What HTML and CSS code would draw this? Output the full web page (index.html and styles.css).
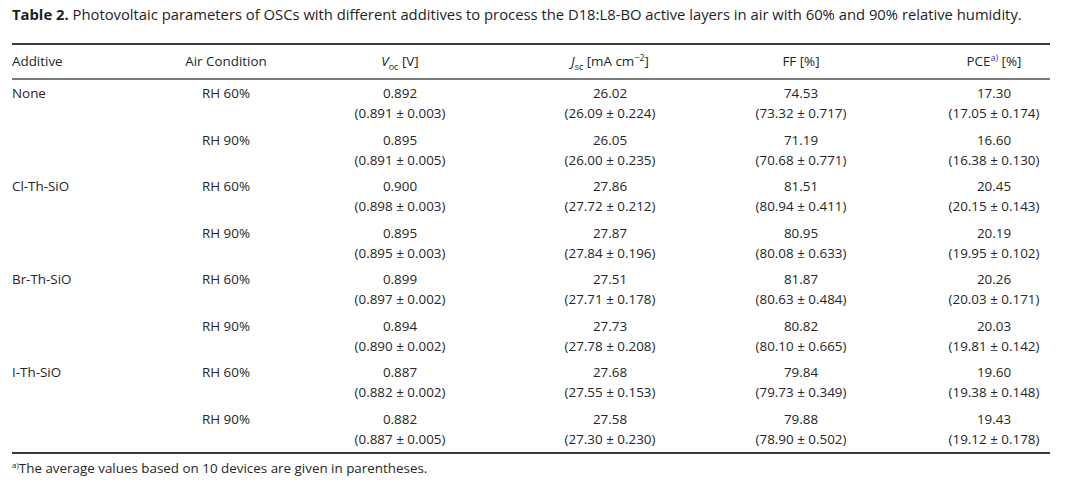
FILE: index.html
```html
<!DOCTYPE html>
<html lang="en">
<head>
<meta charset="utf-8">
<title>Table 2</title>
<link rel="stylesheet" href="styles.css">
</head>
<body>
<div class="page">
  <p class="caption"><b>Table 2.</b> Photovoltaic parameters of OSCs with different additives to process the D18:L8-BO active layers in air with 60% and 90% relative humidity.</p>
  <div class="table">
    <div class="row head">
      <div class="c c1">Additive</div>
      <div class="c c2">Air Condition</div>
      <div class="c c3"><i>V</i><sub>oc</sub> [V]</div>
      <div class="c c4"><i>J</i><sub>sc</sub> [mA cm<sup>−2</sup>]</div>
      <div class="c c5">FF [%]</div>
      <div class="c c6">PCE<sup class="ref">a)</sup> [%]</div>
    </div>

    <div class="row">
      <div class="c c1">None</div><div class="c c2">RH 60%</div>
      <div class="c c3">0.892<br>(0.891 ± 0.003)</div>
      <div class="c c4">26.02<br>(26.09 ± 0.224)</div>
      <div class="c c5">74.53<br>(73.32 ± 0.717)</div>
      <div class="c c6">17.30<br>(17.05 ± 0.174)</div>
    </div>
    <div class="row">
      <div class="c c1"></div><div class="c c2">RH 90%</div>
      <div class="c c3">0.895<br>(0.891 ± 0.005)</div>
      <div class="c c4">26.05<br>(26.00 ± 0.235)</div>
      <div class="c c5">71.19<br>(70.68 ± 0.771)</div>
      <div class="c c6">16.60<br>(16.38 ± 0.130)</div>
    </div>
    <div class="row">
      <div class="c c1">Cl-Th-SiO</div><div class="c c2">RH 60%</div>
      <div class="c c3">0.900<br>(0.898 ± 0.003)</div>
      <div class="c c4">27.86<br>(27.72 ± 0.212)</div>
      <div class="c c5">81.51<br>(80.94 ± 0.411)</div>
      <div class="c c6">20.45<br>(20.15 ± 0.143)</div>
    </div>
    <div class="row">
      <div class="c c1"></div><div class="c c2">RH 90%</div>
      <div class="c c3">0.895<br>(0.895 ± 0.003)</div>
      <div class="c c4">27.87<br>(27.84 ± 0.196)</div>
      <div class="c c5">80.95<br>(80.08 ± 0.633)</div>
      <div class="c c6">20.19<br>(19.95 ± 0.102)</div>
    </div>
    <div class="row">
      <div class="c c1">Br-Th-SiO</div><div class="c c2">RH 60%</div>
      <div class="c c3">0.899<br>(0.897 ± 0.002)</div>
      <div class="c c4">27.51<br>(27.71 ± 0.178)</div>
      <div class="c c5">81.87<br>(80.63 ± 0.484)</div>
      <div class="c c6">20.26<br>(20.03 ± 0.171)</div>
    </div>
    <div class="row">
      <div class="c c1"></div><div class="c c2">RH 90%</div>
      <div class="c c3">0.894<br>(0.890 ± 0.002)</div>
      <div class="c c4">27.73<br>(27.78 ± 0.208)</div>
      <div class="c c5">80.82<br>(80.10 ± 0.665)</div>
      <div class="c c6">20.03<br>(19.81 ± 0.142)</div>
    </div>
    <div class="row">
      <div class="c c1">I-Th-SiO</div><div class="c c2">RH 60%</div>
      <div class="c c3">0.887<br>(0.882 ± 0.002)</div>
      <div class="c c4">27.68<br>(27.55 ± 0.153)</div>
      <div class="c c5">79.84<br>(79.73 ± 0.349)</div>
      <div class="c c6">19.60<br>(19.38 ± 0.148)</div>
    </div>
    <div class="row last">
      <div class="c c1"></div><div class="c c2">RH 90%</div>
      <div class="c c3">0.882<br>(0.887 ± 0.005)</div>
      <div class="c c4">27.58<br>(27.30 ± 0.230)</div>
      <div class="c c5">79.88<br>(78.90 ± 0.502)</div>
      <div class="c c6">19.43<br>(19.12 ± 0.178)</div>
    </div>
  </div>
  <p class="note"><sup>a)</sup>The average values based on 10 devices are given in parentheses.</p>
</div>
</body>
</html>
```
FILE: styles.css
```css
html, body {
  margin: 0;
  padding: 0;
  background: #ffffff;
}
.page {
  padding: 4px 30px 0 12px;
  font-family: "Open Sans", "Noto Sans", sans-serif;
  color: #262626;
  font-size: 13.4px;
}
.caption {
  margin: 0;
  font-size: 14.8px;
  line-height: 20px;
  color: #1e1e1e;
  white-space: nowrap;
}
.caption b {
  font-weight: 700;
}
.table {
  margin-top: 19px;
  border-top: 2px solid #3a3a3a;
  border-bottom: 2px solid #3a3a3a;
}
.row {
  display: grid;
  grid-template-columns: 138px 152px 196px 224px 158px 1fr;
  padding: 3px 0 3.5px;
  line-height: 20px;
}
.row.head {
  padding: 6px 0 7px;
  border-bottom: 2px solid #7a7a7a;
}
.c {
  text-align: center;
  white-space: nowrap;
}
.c1 {
  text-align: left;
}
.c6 {
  padding-left: 58px;
}
sub, sup {
  font-size: 9px;
  line-height: 0;
}
sup.ref {
  color: #3a3ad0;
}
.note {
  margin: 4px 0 0;
  line-height: 20px;
  font-size: 13.4px;
}
.note sup {
  font-size: 8px;
}
```
